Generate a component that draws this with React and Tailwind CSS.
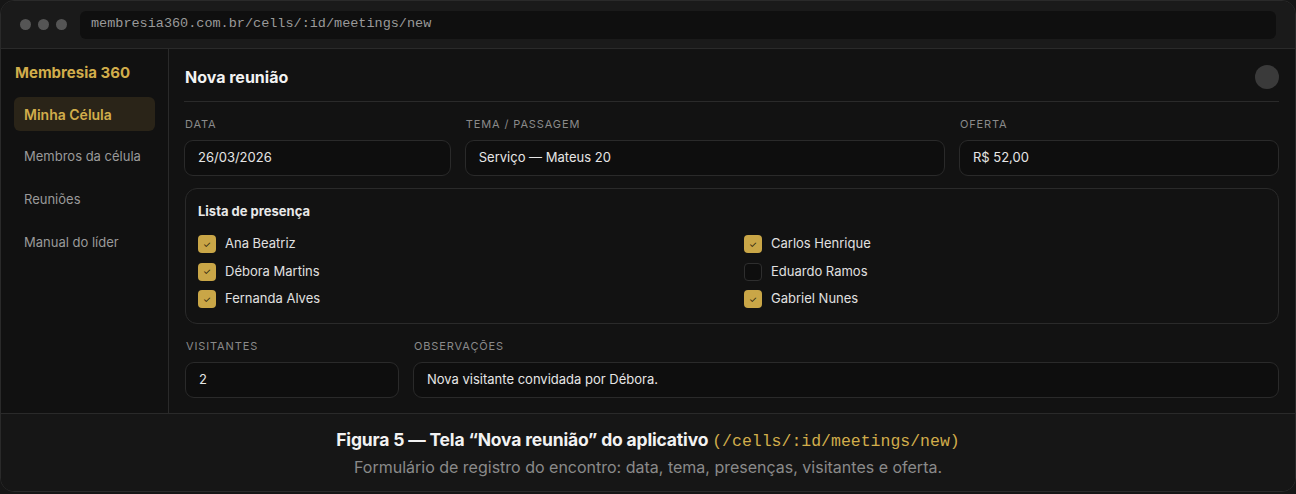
import React from 'react';

const members = [
    { name: 'Ana Beatriz', on: true },
    { name: 'Carlos Henrique', on: true },
    { name: 'Débora Martins', on: true },
    { name: 'Eduardo Ramos', on: false },
    { name: 'Fernanda Alves', on: true },
    { name: 'Gabriel Nunes', on: true },
];

const navItems = ['Membros da célula', 'Reuniões', 'Manual do líder'];

const Label = ({ children }) => (
    <div className="text-[11px] uppercase tracking-[0.08em] text-[#8a8a8a] leading-none mb-[10px] pl-px">{children}</div>
);

const Field = ({ children, className = '' }) => (
    <div className={`h-[36px] flex items-center px-[13px] rounded-[9px] border border-[#2a2a2a] bg-[#0e0e0e] text-[13px] text-[#e6e6e6] ${className}`}>
        {children}
    </div>
);

const Check = ({ on }) =>
    on ? (
        <div className="w-[18px] h-[18px] rounded-[4px] bg-[#c9a647] flex items-center justify-center text-[9px] text-[#1a1408] leading-none">✓</div>
    ) : (
        <div className="w-[18px] h-[18px] rounded-[4px] border border-[#2e2e2e] bg-[#0e0e0e]" />
    );

export default function App() {
    return (
        <div className="w-[1296px] h-[494px] bg-[#161616] font-['Inter',sans-serif]">
            <div className="h-[492px] rounded-[14px] border border-[#2a2a2a] overflow-hidden flex flex-col bg-[#121212]">
                {/* browser bar */}
                <div className="h-[48px] flex items-center gap-[10px] pl-[19px] pr-[19px] bg-[#1a1a1a] border-b border-[#2a2a2a] shrink-0">
                    <div className="flex gap-[7px]">
                        <span className="w-[11px] h-[11px] rounded-full bg-[#555]" />
                        <span className="w-[11px] h-[11px] rounded-full bg-[#555]" />
                        <span className="w-[11px] h-[11px] rounded-full bg-[#555]" />
                    </div>
                    <div className="flex-1 h-[28px] ml-[3px] rounded-[6px] bg-[#0f0f0f] flex items-center px-[11px] font-['Liberation_Mono',monospace] text-[13.5px] text-[#9a9a9a]">
                        membresia360.com.br/cells/:id/meetings/new
                    </div>
                </div>

                <div className="flex flex-1 min-h-0">
                    {/* sidebar */}
                    <aside className="w-[168px] shrink-0 bg-[#111111] border-r border-[#2a2a2a] px-[13px] pt-[15px]">
                        <div className="text-[15px] font-bold text-[#d1ad4b] pl-px mb-[15px] leading-[18px]">Membresia 360</div>
                        <div className="h-[34px] rounded-[6px] bg-[#2a2418] flex items-center px-[10px] text-[14px] font-semibold text-[#d1ad4b]">Minha Célula</div>
                        <div className="mt-[4px]">
                            {navItems.map((item) => (
                                <div key={item} className="h-[43px] flex items-center px-[10px] text-[13px] text-[#9a9a9a]">
                                    {item}
                                </div>
                            ))}
                        </div>
                    </aside>

                    {/* main */}
                    <main className="flex-1 pl-[15px] pr-[16px] pt-[16px]">
                        <div className="flex items-center justify-between h-[24px]">
                            <h1 className="text-[16px] font-bold text-[#f2f2f2] pl-px">Nova reunião</h1>
                            <span className="w-[24px] h-[24px] rounded-full bg-[#3a3a3a]" />
                        </div>
                        <div className="h-px bg-[#2a2a2a] mt-[12px] mb-[17px]" />

                        <div className="grid grid-cols-[1fr_1.8fr_1.2fr] gap-x-[14px]">
                            <div>
                                <Label>Data</Label>
                                <Field>26/03/2026</Field>
                            </div>
                            <div>
                                <Label>Tema / Passagem</Label>
                                <Field>Serviço — Mateus 20</Field>
                            </div>
                            <div>
                                <Label>Oferta</Label>
                                <Field>R$ 52,00</Field>
                            </div>
                        </div>

                        <div className="mt-[12px] ml-px rounded-[12px] border border-[#2a2a2a] px-[12px] pt-[14px] pb-[15px]">
                            <div className="text-[13px] font-bold text-[#e8e8e8] mb-[16px] leading-[16px]">Lista de presença</div>
                            <div className="grid grid-cols-2 gap-x-[24px] gap-y-[9.5px]">
                                {members.map((m) => (
                                    <div key={m.name} className="flex items-center gap-[9px] h-[18px]">
                                        <Check on={m.on} />
                                        <span className="text-[13px] text-[#e0e0e0]">{m.name}</span>
                                    </div>
                                ))}
                            </div>
                        </div>

                        <div className="mt-[17px] flex gap-[14px] pl-px">
                            <div className="w-[214px]">
                                <Label>Visitantes</Label>
                                <Field>2</Field>
                            </div>
                            <div className="flex-1">
                                <Label>Observações</Label>
                                <Field>Nova visitante convidada por Débora.</Field>
                            </div>
                        </div>
                    </main>
                </div>

                {/* caption */}
                <div className="h-[78px] shrink-0 border-t border-[#2a2a2a] bg-[#161616] flex flex-col items-center justify-center gap-[6px]">
                    <div className="text-[17.5px] font-bold text-[#f2f2f2] leading-[20px] tracking-[-0.01em]">
                        Figura 5 — Tela “Nova reunião” do aplicativo{' '}
                        <span className="font-['Liberation_Mono',monospace] font-normal text-[16.5px] tracking-normal text-[#d1ad4b]">(/cells/:id/meetings/new)</span>
                    </div>
                    <div className="text-[16px] text-[#8a8a8a] leading-[18px]">
                        Formulário de registro do encontro: data, tema, presenças, visitantes e oferta.
                    </div>
                </div>
            </div>
        </div>
    );
}
